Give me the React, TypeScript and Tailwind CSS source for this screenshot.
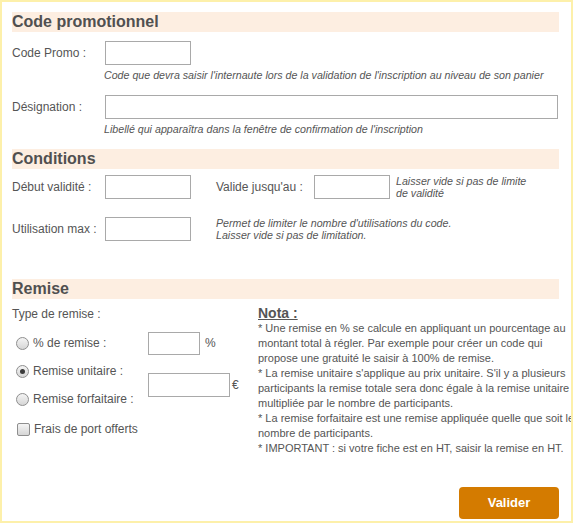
import React from "react";

function Heading({ children, className = "" }: { children: React.ReactNode; className?: string }) {
  return (
    <div className={"h-[20px] shrink-0 bg-[#fdeee1] text-[16px] leading-[20px] font-bold text-[#505050] " + className}>
      {children}
    </div>
  );
}

function Input({ className = "" }: { className?: string }) {
  return <div className={"h-[24px] shrink-0 border border-[#a9a9a9] bg-white " + className} />;
}

function Radio({ checked = false }: { checked?: boolean }) {
  return (
    <span className="relative inline-flex h-[13px] w-[13px] shrink-0 items-center justify-center rounded-full border border-[#8e8e8e] bg-gradient-to-b from-[#f4f4f4] to-[#d6d6d6]">
      {checked && <span className="h-[5px] w-[5px] rounded-full bg-[#3a3a3a]" />}
    </span>
  );
}

export default function App() {
  const notes = [
    "* Une remise en % se calcule en appliquant un pourcentage au",
    "montant total à régler. Par exemple pour créer un code qui",
    "propose une gratuité le saisir à 100% de remise.",
    "* La remise unitaire s'applique au prix unitaire. S'il y a plusieurs",
    "participants la remise totale sera donc égale à la remise unitaire",
    "multipliée par le nombre de participants.",
    "* La remise forfaitaire est une remise appliquée quelle que soit le",
    "nombre de participants.",
    "* IMPORTANT : si votre fiche est en HT, saisir la remise en HT.",
  ];
  return (
    <div className="h-[523px] w-[573px] overflow-hidden border-2 border-[#fdf0aa] bg-white font-['Liberation_Sans',Arial,sans-serif] text-[12px] text-[#555]">
      <div className="flex h-full flex-col pb-[2px] pl-[10px] pr-[12px] pt-[10px]">
        <Heading>Code promotionnel</Heading>

        <div className="mt-[9px] flex h-[24px] items-center">
          <span className="w-[93px]">Code Promo :</span>
          <Input className="w-[86px]" />
        </div>
        <p className="ml-[92px] mt-[3px] whitespace-nowrap text-[10.67px] italic leading-[14px]">
          Code que devra saisir l'internaute lors de la validation de l'inscription au niveau de son panier
        </p>

        <div className="mt-[13px] flex h-[24px] items-center">
          <span className="w-[93px]">Désignation :</span>
          <Input className="w-[453px]" />
        </div>
        <p className="ml-[92px] mt-[3px] whitespace-nowrap text-[10.67px] italic leading-[14px]">
          Libellé qui apparaîtra dans la fenêtre de confirmation de l'inscription
        </p>

        <Heading className="mt-[13px]">Conditions</Heading>

        <div className="mt-[6px] flex h-[24px] items-center">
          <span className="w-[93px]">Début validité :</span>
          <Input className="w-[86px]" />
          <span className="ml-[25px] w-[98px]">Valide jusqu'au :</span>
          <Input className="w-[76px]" />
          <p className="ml-[6px] text-[10.67px] italic leading-[12.5px]">
            Laisser vide si pas de limite
            <br />
            de validité
          </p>
        </div>

        <div className="mt-[18px] flex h-[24px] items-center">
          <span className="w-[93px]">Utilisation max :</span>
          <Input className="w-[86px]" />
          <p className="ml-[25px] text-[10.67px] italic leading-[12.5px]">
            Permet de limiter le nombre d'utilisations du code.
            <br />
            Laisser vide si pas de limitation.
          </p>
        </div>

        <Heading className="mt-[38px]">Remise</Heading>

        <div className="flex">
          <div className="w-[246px] shrink-0">
            <div className="mt-[7px] leading-[16px]">Type de remise :</div>
            <div className="mt-[7px] grid grid-cols-[136px_auto] grid-rows-[28px_28px_28px]">
              <div className="flex items-center pl-[4px]">
                <Radio />
                <span className="ml-[4px]">% de remise :</span>
              </div>
              <div className="flex items-center">
                <Input className="!h-[23px] w-[52px]" />
                <span className="ml-[5px]">%</span>
              </div>
              <div className="flex items-center pl-[4px]">
                <Radio checked />
                <span className="ml-[4px]">Remise unitaire :</span>
              </div>
              <div className="row-span-2 flex items-center">
                <Input className="w-[82px]" />
                <span className="ml-[2px]">€</span>
              </div>
              <div className="flex items-center pl-[4px]">
                <Radio />
                <span className="ml-[4px]">Remise forfaitaire :</span>
              </div>
            </div>
            <div className="mt-[6px] flex h-[20px] items-center pl-[5px]">
              <span className="h-[13px] w-[13px] shrink-0 rounded-[2px] border border-[#8e8e8e] bg-gradient-to-b from-[#f4f4f4] to-[#d6d6d6]" />
              <span className="ml-[4px]">Frais de port offerts</span>
            </div>
          </div>
          <div className="whitespace-nowrap">
            <div className="mt-[6px] text-[14px] font-bold leading-[16px] underline">Nota :</div>
            {notes.map((n, i) => (
              <div key={i} className="text-[11px] leading-[15px]">
                {n}
              </div>
            ))}
          </div>
        </div>

        <div className="mt-auto flex justify-end">
          <button className="h-[32px] w-[100px] rounded-[4px] bg-[#d47b00] text-[13px] font-bold text-white">
            Valider
          </button>
        </div>
      </div>
    </div>
  );
}
